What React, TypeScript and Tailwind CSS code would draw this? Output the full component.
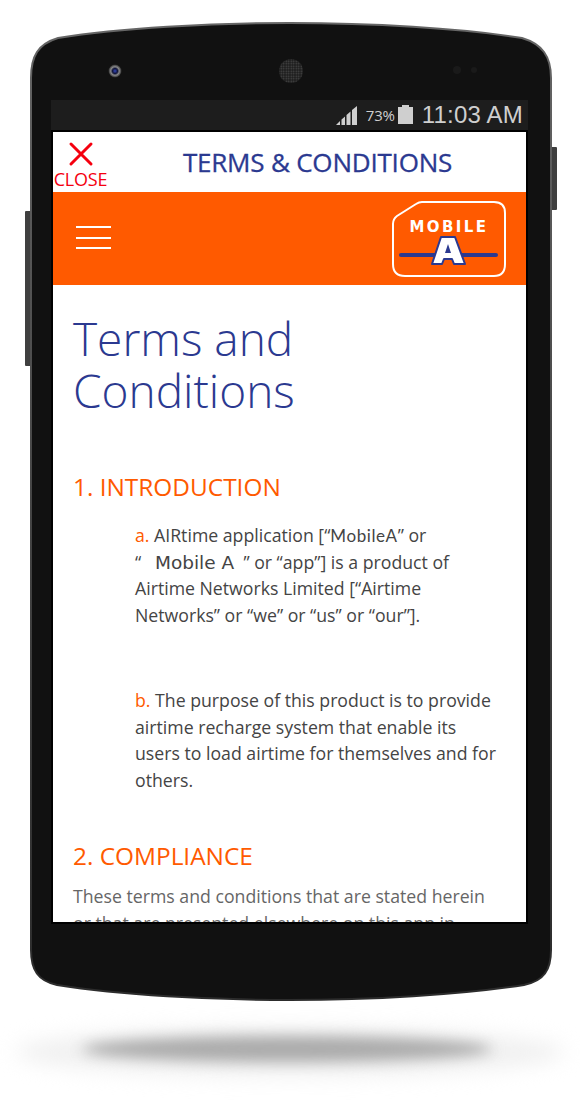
import React from 'react'

const uiFont = 'font-["Open_Sans","Noto_Sans",sans-serif]'

const PhoneBody = () => (
    <svg className="absolute inset-0" width="580" height="1100" viewBox="0 0 580 1100">
        <defs>
            <radialGradient id="lens">
                <stop offset="0" stopColor="#3346b8" />
                <stop offset="0.4" stopColor="#12163a" />
                <stop offset="0.65" stopColor="#8a8a8a" />
                <stop offset="1" stopColor="#2c2c2c" />
            </radialGradient>
            <pattern id="mesh" width="2.5" height="2.5" patternUnits="userSpaceOnUse">
                <rect width="2.5" height="2.5" fill="#1c1c1c" />
                <circle cx="1.25" cy="1.25" r="0.8" fill="#4a4a4a" />
            </pattern>
            <linearGradient id="rim" x1="0" y1="0" x2="0" y2="1">
                <stop offset="0" stopColor="#666" />
                <stop offset="0.5" stopColor="#444" />
                <stop offset="1" stopColor="#2c2c2c" />
            </linearGradient>
        </defs>
        {/* side buttons */}
        <rect x="25" y="211" width="8" height="155" rx="1" fill="#3f3f3f" />
        <rect x="548" y="147" width="9" height="63" rx="1" fill="#3f3f3f" />
        {/* body */}
        <path
            d="M31 78 C31 56 38 44 58 38 C120 28 210 23 290 23 C370 23 460 28 522 38 C542 44 551 56 551 78 L551 950 C551 970 544 981 524 985 C460 995 370 1000 290 1000 C210 1000 120 995 57 985 C38 981 31 970 31 950 Z"
            fill="#111"
            stroke="url(#rim)"
            strokeWidth="2"
        />
        <circle cx="115" cy="71" r="6.5" fill="url(#lens)" />
        <circle cx="291" cy="71" r="12" fill="url(#mesh)" />
        <circle cx="457" cy="70" r="4" fill="#1a1a1a" />
        <circle cx="474" cy="70" r="3" fill="#1a1a1a" />
        {/* status bar and screen edge */}
        <rect x="51" y="100" width="477" height="32" fill="#1d1d1d" />
        <rect x="51" y="130" width="477" height="794" fill="#000" />
    </svg>
)

const FloorShadow = () => (
    <>
        <div className="absolute left-[15px] top-[1028px] h-[48px] w-[550px] rounded-[50%] bg-[#f0f0f0] blur-[10px]" />
        <div className="absolute left-[82px] top-[1036px] h-[26px] w-[410px] rounded-[50%] bg-[#ababab] blur-[7px]" />
    </>
)

const StatusBar = () => (
    <div className="absolute left-[51px] top-[100px] flex h-[30px] w-[477px] items-center justify-end pr-[5px] text-[#cfcfcf]">
        <svg width="23" height="20" viewBox="0 0 23 20" className="mr-[8px] mt-[2px]">
            <path d="M1 19 L5 15 V19 Z M6.5 19 V13.5 L10 10.5 V19 Z M11.5 19 V9 L15.5 5.5 V19 Z M17 19 V4 L22 0 V19 Z" fill="#cfcfcf" />
        </svg>
        <span className={`${uiFont} mr-[3px] text-[15px] tracking-[-0.2px]`}>73%</span>
        <svg width="16" height="20" viewBox="0 0 16 20" className="mr-[8px]">
            <path d="M4 0 H11 V2 H15 V19 H0 V2 H4 Z" fill="#cfcfcf" />
        </svg>
        <span className='font-["Liberation_Sans",sans-serif] text-[24px] tracking-[0.2px]'>11:03 AM</span>
    </div>
)

const Logo = () => (
    <svg width="116" height="78" viewBox="0 0 116 78">
        <path
            d="M31 2 H103 Q114 2 114 13 V64 Q114 76 103 76 H14 Q2 76 2 64 V24 Q2 19 6 16 L25 4 Q28 2 31 2 Z"
            fill="#ff5a00"
            stroke="#fff"
            strokeWidth="2"
        />
        <text x="58" y="32" textAnchor="middle" fill="#fff" fontFamily="DejaVu Sans" fontWeight="700" fontSize="15" letterSpacing="2.4">
            MOBILE
        </text>
        <rect x="8" y="53" width="99" height="4" rx="2" fill="#2b3990" />
        <path d="M50 37 H64 L74 64 H63 L61 59 H53 L51 64 H41 Z" fill="#fff" stroke="#2b3990" strokeWidth="2" strokeLinejoin="round" />
        <path d="M57 44 L60 53 H54 Z" fill="#2b3990" />
    </svg>
)

const App = () => {
    return (
        <div className="relative h-[1100px] w-[580px] overflow-hidden bg-white">
            <FloorShadow />
            <PhoneBody />
            <StatusBar />

            {/* screen */}
            <div className={`${uiFont} absolute left-[53px] top-[132px] h-[790px] w-[473px] overflow-hidden bg-white`}>
                <div className="relative flex h-[60px] items-center justify-center pl-[56px]">
                    <div className="absolute left-0 top-[9px] flex w-[55px] flex-col items-center">
                        <svg width="26" height="26" viewBox="0 0 26 26">
                            <path d="M3 3 L23 23 M23 3 L3 23" stroke="#f5000f" strokeWidth="3" strokeLinecap="round" />
                        </svg>
                        <span className="mt-[3px] text-[18px] leading-[19px] tracking-[-0.2px] text-[#f5000f]">CLOSE</span>
                    </div>
                    <h1 className="text-[26px] leading-none tracking-[-0.2px] text-[#2b3990] [-webkit-text-stroke:0.3px_#2b3990]">TERMS &amp; CONDITIONS</h1>
                </div>

                <div className="flex h-[93px] items-center justify-between bg-[#ff5a00] pl-[23px] pr-[19px]">
                    <div className="mb-[2px] flex w-[35px] flex-col gap-[8.5px]">
                        <div className="h-[2px] bg-white" />
                        <div className="h-[2px] bg-white" />
                        <div className="h-[2px] bg-white" />
                    </div>
                    <Logo />
                </div>

                <div className="px-[20px] pt-[27px]">
                    <h2 className="text-[46px] font-light leading-[52px] text-[#2b3990]">
                        Terms and
                        <br />
                        Conditions
                    </h2>
                    <h3 className="mt-[55px] text-[24.4px] leading-[32px] text-[#ff5a00]">1. INTRODUCTION</h3>

                    <p className="ml-[62px] mt-[19px] text-[17.7px] leading-[26.5px] text-[#444]">
                        <span className="text-[#ff5a00]">a.</span> AIRtime application [“<span className='font-["Lato",sans-serif] text-[17px] leading-none tracking-[0.6px]'>MobileA</span>” or
                        <br />“ &nbsp; <span className='font-["DejaVu_Sans",sans-serif] text-[18.5px] leading-none'>Mobile A</span> &nbsp;” or “app”] is a product of
                        <br />
                        Airtime Networks Limited [“Airtime
                        <br />
                        Networks” or “we” or “us” or “our”].
                    </p>
                    <p className="ml-[62px] mt-[59px] text-[17.7px] leading-[26.5px] text-[#444]">
                        <span className="text-[#ff5a00]">b.</span> The purpose of this product is to provide
                        <br />
                        airtime recharge system that enable its
                        <br />
                        users to load airtime for themselves and for
                        <br />
                        others.
                    </p>

                    <h3 className="mt-[47px] text-[24.4px] leading-[32px] text-[#ff5a00]">2. COMPLIANCE</h3>
                    <p className="mt-[11px] text-[17.7px] leading-[26.5px] text-[#666]">
                        These terms and conditions that are stated herein
                        <br />
                        or that are presented elsewhere on this app in
                    </p>
                </div>
            </div>
        </div>
    )
}

export default App
